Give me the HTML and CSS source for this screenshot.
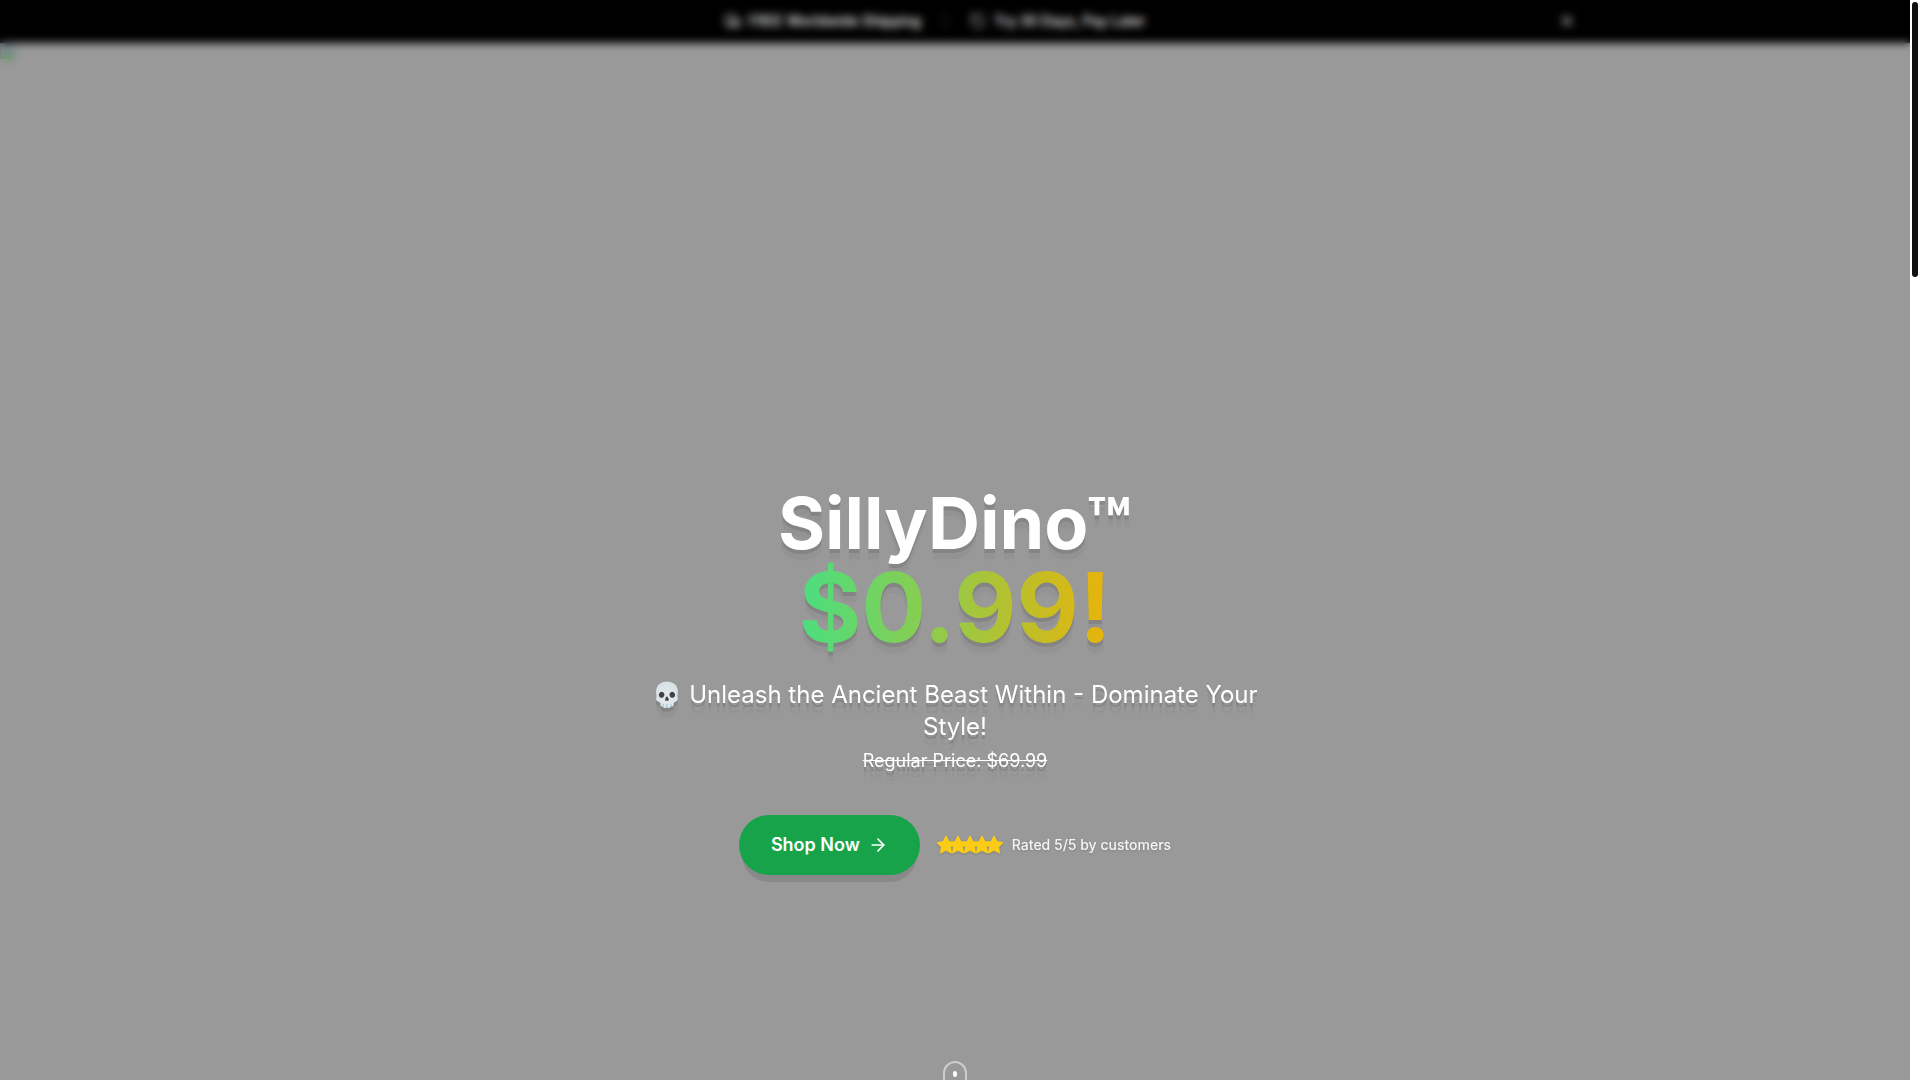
FILE: index.html
```html
<!DOCTYPE html>
<html lang="en">
<head>
    <meta charset="UTF-8">
    <meta name="viewport" content="width=device-width, initial-scale=1.0">
    <title>SillyDino</title>
    <link rel="stylesheet" href="styles.css">
</head>
<body>
    <div class="page">
        <div class="announcement">
            <div class="announcement-inner">
                <div class="announcement-list">
                    <div class="announcement-item">
                        <svg class="icon-sm" viewBox="0 0 24 24"><path d="M14 18V6a2 2 0 0 0-2-2H4a2 2 0 0 0-2 2v11a1 1 0 0 0 1 1h2"/><path d="M15 18H9"/><path d="M19 18h2a1 1 0 0 0 1-1v-3.65a1 1 0 0 0-.22-.62l-3.48-4.35A1 1 0 0 0 17.52 8H14"/><circle cx="17" cy="18" r="2"/><circle cx="7" cy="18" r="2"/></svg>
                        <span>FREE Worldwide Shipping</span>
                    </div>
                    <span class="divider"></span>
                    <div class="announcement-item">
                        <svg class="icon-sm icon-dim" viewBox="0 0 24 24"><path d="M3 12a9 9 0 1 0 9-9 9.75 9.75 0 0 0-6.74 2.74L3 8"/><path d="M3 3v5h5"/></svg>
                        <span>Try 30 Days, Pay Later</span>
                    </div>
                </div>
                <button class="close" type="button" aria-label="Close">
                    <svg class="icon-sm" viewBox="0 0 24 24"><path d="M18 6 6 18"/><path d="m6 6 12 12"/></svg>
                </button>
            </div>
        </div>
        <nav class="navbar"></nav>

        <main class="hero">
            <svg class="hero-image" viewBox="0 0 16 16">
                <path d="M0 0h11l5 5v11H0z" fill="#7f8b93"/>
                <path d="M1 16l6-5 3 2 2-1 3 4z" fill="#4d9a45"/>
                <path d="M0 0v16" stroke="#777" stroke-width="2"/>
            </svg>
            <div class="hero-content">
                <h1>SillyDino™ <span class="price">$0.99!</span></h1>
                <p class="tagline">💀 Unleash the Ancient Beast Within - Dominate Your Style!
                    <s>Regular Price: $69.99</s>
                </p>
                <div class="actions">
                    <button class="shop-btn" type="button">
                        Shop Now
                        <svg class="icon-md" viewBox="0 0 24 24"><path d="M5 12h14"/><path d="m12 5 7 7-7 7"/></svg>
                    </button>
                    <div class="rating">
                        <div class="stars">
                            <svg viewBox="0 0 24 24"><polygon points="12 2 15.09 8.26 22 9.27 17 14.14 18.18 21.02 12 17.77 5.82 21.02 7 14.14 2 9.27 8.91 8.26 12 2"/></svg>
                            <svg viewBox="0 0 24 24"><polygon points="12 2 15.09 8.26 22 9.27 17 14.14 18.18 21.02 12 17.77 5.82 21.02 7 14.14 2 9.27 8.91 8.26 12 2"/></svg>
                            <svg viewBox="0 0 24 24"><polygon points="12 2 15.09 8.26 22 9.27 17 14.14 18.18 21.02 12 17.77 5.82 21.02 7 14.14 2 9.27 8.91 8.26 12 2"/></svg>
                            <svg viewBox="0 0 24 24"><polygon points="12 2 15.09 8.26 22 9.27 17 14.14 18.18 21.02 12 17.77 5.82 21.02 7 14.14 2 9.27 8.91 8.26 12 2"/></svg>
                            <svg viewBox="0 0 24 24"><polygon points="12 2 15.09 8.26 22 9.27 17 14.14 18.18 21.02 12 17.77 5.82 21.02 7 14.14 2 9.27 8.91 8.26 12 2"/></svg>
                        </div>
                        <span>Rated 5/5 by customers</span>
                    </div>
                </div>
            </div>
            <div class="scroll-hint"><span class="scroll-dot"></span></div>
        </main>
    </div>
    <div class="scroll-track"><div class="scroll-thumb"></div></div>
</body>
</html>
```

FILE: styles.css
```css
* {
    box-sizing: border-box;
}

body {
    margin: 0;
    height: 100vh;
    display: flex;
    overflow: hidden;
    font-family: Inter, sans-serif;
    color: #ffffff;
    background: #ffffff;
}

button {
    font-family: inherit;
    color: inherit;
    border: none;
    cursor: pointer;
}

svg {
    display: block;
    fill: none;
    stroke: currentColor;
    stroke-width: 2;
    stroke-linecap: round;
    stroke-linejoin: round;
}

.page {
    flex: 1;
    position: relative;
    display: flex;
    flex-direction: column;
    overflow: hidden;
    background: #999999;
}

/* announcement bar */
.announcement {
    flex: none;
    background: #000000;
    font-size: 14px;
    line-height: 20px;
    font-weight: 500;
}

.announcement-inner {
    max-width: 1280px;
    margin: 0 auto;
    padding: 9px 16px 10px;
    display: flex;
    align-items: center;
    gap: 16px;
}

.announcement-list {
    flex: 1;
    display: flex;
    justify-content: center;
    align-items: center;
    gap: 24px;
}

.announcement-item {
    display: flex;
    align-items: center;
    gap: 8px;
}

.divider {
    width: 1px;
    height: 16px;
    background: #374151;
}

.close {
    padding: 4px;
    background: none;
}

.icon-sm {
    width: 16px;
    height: 16px;
}

.icon-dim {
    opacity: 0.8;
}

.navbar {
    position: absolute;
    top: 0;
    left: 0;
    right: 0;
    height: 108px;
    z-index: 5;
    backdrop-filter: blur(4px);
}

/* hero */
.hero {
    flex: 1;
    position: relative;
    display: flex;
    flex-direction: column;
    align-items: center;
    padding-top: 444px;
}

.hero-image {
    position: absolute;
    top: 0;
    left: 0;
    width: 16px;
    height: 16px;
    stroke: none;
}

.hero-content {
    max-width: 640px;
    text-align: center;
}

h1 {
    display: flex;
    flex-direction: column;
    align-items: center;
    margin: 0 0 24px;
    font-size: 72px;
    line-height: 1;
    font-weight: 700;
    filter: drop-shadow(0 10px 0 rgba(0, 0, 0, 0.04)) drop-shadow(0 4px 0 rgba(0, 0, 0, 0.1));
}

.price {
    font-size: 96px;
    line-height: 1;
    color: transparent;
    background: linear-gradient(to right, #4ade80, #eab308);
    background-clip: text;
}

.tagline {
    margin: 0 0 40px;
    font-size: 24px;
    line-height: 32px;
    filter: drop-shadow(0 10px 0 rgba(0, 0, 0, 0.04)) drop-shadow(0 4px 0 rgba(0, 0, 0, 0.1));
}

.tagline s {
    display: block;
    margin-top: 4px;
    font-size: 18px;
    line-height: 28px;
}

.actions {
    display: flex;
    justify-content: center;
    align-items: center;
    gap: 16px;
}

.shop-btn {
    display: flex;
    align-items: center;
    gap: 8px;
    padding: 16px 32px;
    border-radius: 30px;
    background: #16a34a;
    font-size: 18px;
    line-height: 28px;
    font-weight: 600;
    box-shadow: 0 10px 0 -3px rgba(0, 0, 0, 0.1);
}

.icon-md {
    width: 20px;
    height: 20px;
}

.rating {
    display: flex;
    align-items: center;
    gap: 8px;
    font-size: 14px;
    line-height: 20px;
    font-weight: 500;
    color: rgba(255, 255, 255, 0.9);
    filter: drop-shadow(0 1px 1px rgba(0, 0, 0, 0.15));
}

.stars {
    display: flex;
    color: #facc15;
}

.stars svg {
    width: 20px;
    height: 20px;
    fill: currentColor;
}

.stars svg + svg {
    margin-left: -8px;
}

/* mouse shaped hint at the fold */
.scroll-hint {
    flex: none;
    display: flex;
    justify-content: center;
    width: 24px;
    height: 40px;
    margin-top: 186px;
    padding-top: 8px;
    border: 2px solid rgba(255, 255, 255, 0.5);
    border-radius: 12px;
}

.scroll-dot {
    width: 4px;
    height: 6px;
    border-radius: 2px;
    background: #ffffff;
}

/* scrollbar */
.scroll-track {
    flex: none;
    width: 10px;
    padding: 2px;
    background: #ffffff;
}

.scroll-thumb {
    height: 25.5vh;
    border-radius: 3px;
    background: #0f1111;
}
```
